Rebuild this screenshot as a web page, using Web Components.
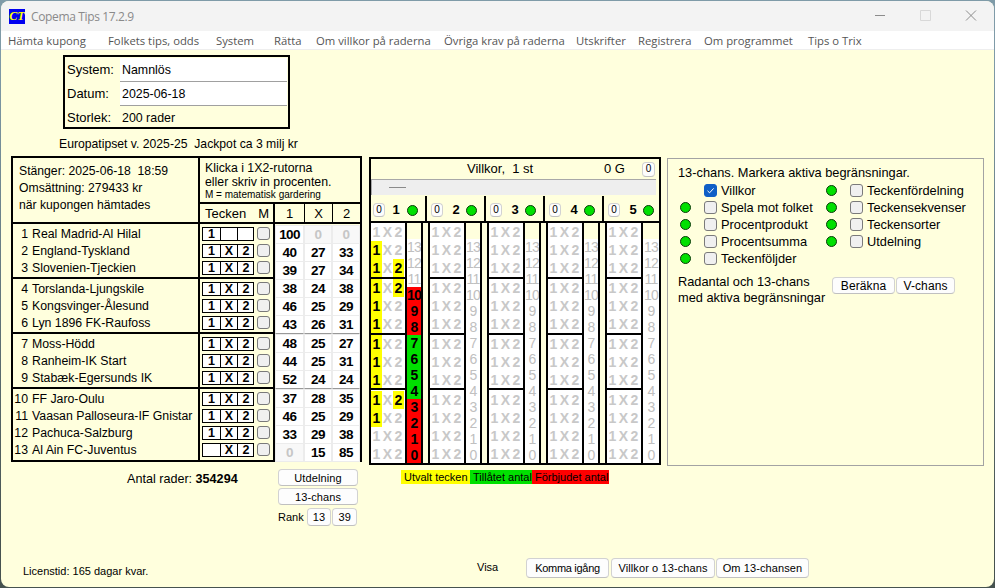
<!DOCTYPE html>
<html lang="sv">
<head>
<meta charset="utf-8">
<title>Copema Tips</title>
<style>
html,body{margin:0;height:588px;overflow:hidden;background:linear-gradient(#7f9ba8 0,#7f9ba8 60px,#46524f 540px);}
body{font:12.2px/14px "Liberation Sans",Arial,sans-serif;color:#000;}
</style>
</head>
<body>
<app-window></app-window>
<script>
function def(name, css, html, init){
  customElements.define(name, class extends HTMLElement{
    connectedCallback(){
      if(this.shadowRoot) return;
      const r=this.attachShadow({mode:'open'});
      const h=typeof html==='function'?html(this):html;
      r.innerHTML='<style>'+css+'</style>'+h;
      if(init) init(r,this);
    }
  });
}
def('ui-btn',`
:host{display:inline-flex;align-items:center;justify-content:center;box-sizing:border-box;background:#fdfdfd;border:1px solid #d2d2d2;border-bottom-color:#c0c0c0;border-radius:4px;font-size:11px;line-height:12px;height:var(--h,17px);width:var(--w,auto);letter-spacing:var(--ls,.1px);white-space:nowrap;}
`,`<slot></slot>`);
def('led-dot',`
:host{display:block;box-sizing:border-box;width:11px;height:11px;border-radius:50%;background:#00e000;border:1px solid #0a3a0a;}
`,``);
def('check-box',`
:host{display:block;box-sizing:border-box;width:13px;height:13px;border-radius:3px;background:#f0f0f0;border:1px solid #7a7a7a;flex:none;}
:host([checked]){background:#0f5fc6;border-color:#0f5fc6;}
svg{display:block;width:11px;height:11px;}
`,h=>h.hasAttribute('checked')?`<svg viewBox="0 0 11 11"><path d="M2.5 5.8 4.6 7.8 8.6 3.4" fill="none" stroke="#fff" stroke-width="1"/></svg>`:'');

def('title-bar',`
:host{display:flex;align-items:center;height:30px;background:#f3f3f3;flex:none;font:12px "Open Sans",sans-serif;color:#8a8a8a;}
.ic{width:16px;height:15px;margin:0 6px 0 8px;background:#0000f0;color:#ff0;font:italic bold 12px/15px "Liberation Serif",serif;text-align:center;}
.t{flex:1;letter-spacing:-.03em;}
svg{display:block;margin-right:17px;}
`,`<div class="ic">CT</div><div class="t">Copema Tips 17.2.9</div>
<svg width="102" height="12" viewBox="0 0 102 12" fill="none">
<path d="M0 5.5H10" stroke="#8c8c8c"/>
<path d="M45.5 .5h10v10h-10z" stroke="#d8d8d8"/>
<path d="M91 .5l10 10M101 .5l-10 10" stroke="#8c8c8c"/>
</svg>`);

def('menu-bar',`
:host{display:grid;grid-template-columns:100px 108px 58px 42px 128px 132px 62px 66px 104px auto;height:19px;align-items:center;padding-left:7px;background:#fff;flex:none;font:11.3px "Open Sans",sans-serif;color:#555;border-bottom:1px solid #eee;box-sizing:border-box;}
span{white-space:nowrap;}
`,['Hämta kupong','Folkets tips, odds','System','Rätta','Om villkor på raderna','Övriga krav på raderna','Utskrifter','Registrera','Om programmet','Tips o Trix'].map(s=>`<span>${s}</span>`).join(''));

def('info-box',`
:host{display:grid;grid-template-columns:53px 167px;box-sizing:border-box;width:227px;height:74px;border:2px solid #000;margin-left:62px;padding:1px 0 0 2px;grid-auto-rows:24px;}
.l{display:flex;align-items:center;font-size:13px;}
.v{background:#fff;border-bottom:1px solid #a0a0a0;display:flex;align-items:center;padding-left:2px;height:23px;font-size:12.4px;}
.p{background:none;border:0;}
`,`<div class="l">System:</div><div class="v">Namnlös</div>
<div class="l">Datum:</div><div class="v">2025-06-18</div>
<div class="l">Storlek:</div><div class="v p">200 rader</div>`);

const NAMES=[['1','Real Madrid-Al Hilal'],['2','England-Tyskland'],['3','Slovenien-Tjeckien'],['4','Torslanda-Ljungskile'],['5','Kongsvinger-Ålesund'],['6','Lyn 1896 FK-Raufoss'],['7','Moss-Hödd'],['8','Ranheim-IK Start'],['9','Stabæk-Egersunds IK'],['10','FF Jaro-Oulu'],['11','Vaasan Palloseura-IF Gnistar'],['12','Pachuca-Salzburg'],['13','Al Ain FC-Juventus']];
const SIGN=['1','1X2','1X2','1X2','1X2','1X2','1X2','1X2','1X2','1X2','1X2','1X2','X2'];
const PCT=[[100,0,0],[40,27,33],[39,27,34],[38,24,38],[46,25,29],[43,26,31],[48,25,27],[44,25,31],[52,24,24],[37,28,35],[46,25,29],[33,29,38],[0,15,85]];
const GROUPS=[[0,3],[3,6],[6,9],[9,13]];

def('match-table',`
:host{display:block;box-sizing:border-box;width:351px;height:306px;border:2px solid #000;}
.top{display:grid;grid-template-columns:185px 2px 160px;height:64px;}
.bar{background:#000;}
.close{padding:5px 0 0 6px;line-height:17px;}
.close div{white-space:pre;}
.klick{padding-top:4px;padding-left:5px;height:40px;line-height:13.5px;font-size:12.3px;}
.klick small{display:block;font-size:10px;line-height:11px;}
.rt{display:flex;flex-direction:column;}
.hd{display:grid;grid-template-columns:73px 2px 29px 1px 27px 1px 27px;height:19px;border-top:2px solid #000;align-items:center;text-align:center;font-size:13px;line-height:16px;}
.hd .v{background:#000;align-self:stretch;}
.hd .tk{display:flex;justify-content:space-between;padding:0 4px 0 5px;}
.body{display:grid;grid-template-columns:185px 2px 73px 2px 85px;border-top:2px solid #000;height:236px;}
.g{padding:1px 0;height:51px;border-bottom:2px solid #000;}
.g:last-child{border-bottom:0;height:68px;}
.n{display:grid;grid-template-columns:15px 1fr;column-gap:4px;height:17px;line-height:19px;white-space:nowrap;font-size:12.3px;}
.n b{font-weight:400;text-align:right;}
.t{display:flex;align-items:center;height:17px;padding-left:2px;gap:3px;}
.signs{display:grid;grid-template-columns:repeat(3,17px);box-sizing:border-box;border:1px solid #000;width:52px;height:14px;background:#fff;font-weight:700;font-size:12.5px;text-align:center;line-height:12px;}
.signs span+span{border-left:1px solid #000;}
.pr{display:grid;grid-template-columns:29px 28px 28px;height:18px;}
.pr div{box-sizing:border-box;background:#fff;border:1px solid #ececec;font:700 13.5px/17px "Liberation Sans",sans-serif;text-align:center;letter-spacing:-.6px;}
.pr div.z{color:#c6c6c6;background:#f8f8f8;}
.pg.b .pr:last-child div{border-bottom-color:#999;}
.pc{padding-top:1px;}
.pg.s{margin-top:1px;}
`,()=>{
  const names=GROUPS.map(([a,b])=>`<div class="g">${NAMES.slice(a,b).map(n=>`<div class="n"><b>${n[0]}</b><span>${n[1]}</span></div>`).join('')}</div>`).join('');
  const marks=GROUPS.map(([a,b])=>`<div class="g">${SIGN.slice(a,b).map(s=>`<div class="t"><div class="signs">${['1','X','2'].map(c=>`<span>${s.includes(c)?c:''}</span>`).join('')}</div><check-box></check-box></div>`).join('')}</div>`).join('');
  const pct=GROUPS.map(([a,b],i)=>`<div class="pg ${i<3?'b':''} ${i>=2?'s':''}">${PCT.slice(a,b).map(r=>`<div class="pr">${r.map(v=>`<div class="${v===0?'z':''}">${v}</div>`).join('')}</div>`).join('')}</div>`).join('');
  return `<div class="top"><div class="close"><div>Stänger: 2025-06-18  18:59</div><div>Omsättning: 279433 kr</div><div>när kupongen hämtades</div></div><div class="bar"></div>
  <div class="rt"><div class="klick">Klicka i 1X2-rutorna<br>eller skriv in procenten.<small>M = matematisk gardering</small></div>
  <div class="hd"><div class="tk"><span>Tecken</span><span>M</span></div><div class="v"></div><div>1</div><div class="v"></div><div>X</div><div class="v"></div><div>2</div></div></div></div>
  <div class="body"><div>${names}</div><div class="bar"></div><div>${marks}</div><div class="bar"></div><div class="pc">${pct}</div></div>`;
});

const PICK=[[],['1'],['1','2'],['1','2'],['1'],['1'],['1'],['1'],['1'],['1','2'],['1'],[],[]];
const NUMS=[13,12,11,10,9,8,7,6,5,4,3,2,1,0];
def('villkor-panel',`
:host{display:block;box-sizing:border-box;width:292px;height:308px;border:2px solid #000;}
.tp{display:grid;grid-template-columns:233px 38px auto;height:20px;align-items:center;font-size:13px;white-space:nowrap;}
.tp .c{padding-left:96px;}
.tp ui-btn{--w:13px;--h:15px;font-size:10px;vertical-align:middle;}
.sc{height:16px;width:285px;box-sizing:border-box;background:#eeeeee;border-top:1px solid #a8a8a8;border-left:1px solid #a8a8a8;padding-top:7px;}
.sc i{display:block;width:17px;height:1px;background:#8a8a8a;margin-left:17px;}
.hd{display:grid;grid-template-columns:56px 59px 59px 59px 55px;height:26px;border-bottom:2px solid #000;}
.h{display:flex;align-items:center;border-right:2px solid #000;padding:3px 0 0 4px;margin-top:1px;box-sizing:border-box;}
.h:first-child{padding-left:2px;}
.h:last-child{border-right:0;}
.h ui-btn{--w:12px;--h:14px;font-size:10px;flex:none;}
.h b{width:20px;margin-left:3px;text-align:center;font-size:13px;}
.h:first-child b{margin-left:1px;margin-right:1px;}
.cols{display:grid;grid-template-columns:59px 59px 59px 59px 52px;height:240px;}
.col{display:grid;grid-template-columns:34px 2px 14px 2px 5px 2px;}
.col:last-child{grid-template-columns:34px 2px 16px;}
.v{background:#000;}
.sig{background:#fff;}
.g{border-bottom:2px solid #000;overflow:hidden;}
.g:last-child{border-bottom:0;padding-top:1px;}
.r{display:grid;grid-template-columns:11px 11px 11px;height:18px;font:700 14px/18px "Liberation Sans",sans-serif;color:#c8c8c8;text-align:center;}
.r .on{background:#ff0;color:#000;}
.nm{background:linear-gradient(#ffffdd 16px,#fff 16px);padding-top:16px;box-sizing:border-box;overflow:hidden;}
.nm div{height:16px;font:400 14px/16px "Liberation Sans",sans-serif;color:#c0c0c0;text-align:center;letter-spacing:-.7px;white-space:nowrap;}
.nm .red{background:#f00;color:#000;font-weight:700;}
.nm .grn{background:#00e000;color:#000;font-weight:700;}
`,()=>{
  const hd=[1,2,3,4,5].map(i=>`<div class="h"><ui-btn>0</ui-btn><b>${i}</b><led-dot></led-dot></div>`).join('');
  const col=(k)=>{
    const hs=[54,54,53,72];
    const sig=GROUPS.map(([a,b],gi)=>`<div class="g" style="height:${hs[gi]}px">${Array.from({length:b-a},(_,j)=>{
      const p=k===0?PICK[a+j]:[];
      return `<div class="r">${['1','X','2'].map(c=>`<span class="${p.includes(c)?'on':''}">${c}</span>`).join('')}</div>`;}).join('')}</div>`).join('');
    const nm=NUMS.map(n=>{
      let cl='';
      if(k===0){ if((n>=8&&n<=10)||n<=3) cl='red'; else if(n>=4&&n<=7) cl='grn'; }
      return `<div class="${cl}">${n}</div>`;}).join('');
    return `<div class="col"><div class="sig">${sig}</div><div class="v"></div><div class="nm">${nm}</div>${k<4?'<div class="v"></div><div></div><div class="v"></div>':''}</div>`;
  };
  return `<div class="tp"><div class="c">Villkor,&nbsp; 1 st</div><div>0 G</div><div><ui-btn>0</ui-btn></div></div>
  <div class="sc"><i></i></div><div class="hd">${hd}</div><div class="cols">${[0,1,2,3,4].map(col).join('')}</div>`;
});

def('color-legend',`
:host{display:flex;margin:5px 0 0 32px;height:14px;font-size:11px;line-height:14px;white-space:nowrap;}
span{display:block;overflow:hidden;padding-left:3px;box-sizing:border-box;}
.y{background:#ff0;width:69px;}.g{background:#00e000;width:62px;}.r{background:#f00;width:77px;}
`,`<span class="y">Utvalt tecken</span><span class="g">Tillåtet antal</span><span class="r">Förbjudet antal</span>`);

def('chance-panel',`
:host{display:block;box-sizing:border-box;width:317px;height:308px;border:1.5px solid #a3a3a3;padding:6px 0 0 10px;font-size:12.8px;}
.h{height:15px;line-height:15px;white-space:nowrap;}
.g{display:grid;grid-template-columns:26px 120px 26px 1fr;grid-auto-rows:17px;margin-top:2px;}
.d,.c{display:flex;align-items:center;}
.d{padding-left:2px;}
.c{gap:4px;white-space:nowrap;}
.b{display:flex;align-items:flex-start;margin-top:7px;line-height:16px;}
.b .t{width:154px;}
.b ui-btn{--h:17px;font-size:12px;}
.bs{display:flex;gap:1px;margin-top:3px;}
`,()=>{
  const L=[['','Villkor','Teckenfördelning'],['1','Spela mot folket','Teckensekvenser'],['1','Procentprodukt','Teckensorter'],['1','Procentsumma','Utdelning'],['1','Teckenföljder','']];
  const rows=L.map((r,i)=>`<div class="d">${r[0]?'<led-dot></led-dot>':''}</div><div class="c"><check-box ${i==0?'checked':''}></check-box>${r[1]}</div>
  <div class="d">${r[2]?'<led-dot></led-dot>':''}</div><div class="c">${r[2]?'<check-box></check-box>'+r[2]:''}</div>`).join('');
  return `<div class="h">13-chans. Markera aktiva begränsningar.</div><div class="g">${rows}</div>
  <div class="b"><div class="t">Radantal och 13-chans<br>med aktiva begränsningar</div><div class="bs"><ui-btn style="--w:63px">Beräkna</ui-btn><ui-btn style="--w:59px">V-chans</ui-btn></div></div>`;
});

def('result-row',`
:host{display:grid;grid-template-columns:267px 80px;margin-top:7px;}
.a{padding:3px 0 0 116px;white-space:nowrap;font-size:12.6px;}
.a b{font-weight:700;}
.bt{display:flex;flex-direction:column;gap:2px;}
.rk{display:flex;align-items:center;font-size:11px;margin-top:1px;}
.rk span{width:29px;}
.rk ui-btn{--w:25px;--h:18px;margin-right:1px;}
`,`<div class="a">Antal rader: <b>354294</b></div>
<div class="bt"><ui-btn>Utdelning</ui-btn><ui-btn>13-chans</ui-btn><div class="rk"><span>Rank</span><ui-btn>13</ui-btn><ui-btn>39</ui-btn></div></div>`);

def('page-foot',`
:host{display:grid;grid-template-columns:454px 49px auto;margin-top:auto;padding:0 0 9px 22px;align-items:end;font-size:11px;}
.l{height:14px;line-height:14px;}
.v{margin-bottom:4px;}
.bs{display:flex;gap:2px;}
ui-btn{--h:20px;}
`,`<div class="l">Licenstid: 165 dagar kvar.</div><div class="v">Visa</div>
<div class="bs"><ui-btn style="--w:83px;--ls:-.3px">Komma igång</ui-btn><ui-btn style="--w:104px">Villkor o 13-chans</ui-btn><ui-btn style="--w:93px;margin-left:-1px">Om 13-chansen</ui-btn></div>`);

def('app-window',`
:host{display:flex;flex-direction:column;box-sizing:border-box;width:993px;height:586px;margin:1px 1px 0 1px;background:#ffffdd;border-radius:8px;overflow:hidden;}
.cap{margin:8px 0 5px 58px;white-space:pre;height:14px;line-height:14px;}
.cont{display:flex;flex-direction:column;flex:1;}
.main{display:flex;padding-left:10px;align-items:flex-start;}
.lc{width:351px;margin-right:7px;}
.mc{margin-top:1px;margin-right:6px;}
.rc{margin-top:2px;}
`,`<title-bar></title-bar><menu-bar></menu-bar>
<div class="cont"><info-box style="margin-top:5px"></info-box>
<div class="cap">Europatipset v. 2025-25  Jackpot ca 3 milj kr</div>
<div class="main">
<div class="lc"><match-table></match-table><result-row></result-row></div>
<div class="mc"><villkor-panel></villkor-panel><color-legend></color-legend></div>
<div class="rc"><chance-panel></chance-panel></div>
</div>
<page-foot></page-foot></div>`);
</script>
</body>
</html>
